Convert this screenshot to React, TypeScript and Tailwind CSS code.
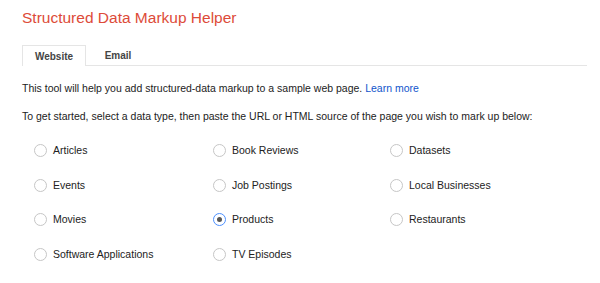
import React from "react";

const items = [
  "Articles", "Book Reviews", "Datasets",
  "Events", "Job Postings", "Local Businesses",
  "Movies", "Products", "Restaurants",
  "Software Applications", "TV Episodes",
];

function Radio({ checked }: { checked?: boolean }) {
  return (
    <span
      className={
        "flex h-[13px] w-[13px] shrink-0 items-center justify-center rounded-full border bg-white " +
        (checked ? "border-[#4d90fe]" : "border-[#c6c6c6]")
      }
    >
      {checked && <span className="h-[5px] w-[5px] rounded-full bg-[#555]" />}
    </span>
  );
}

export default function App() {
  return (
    <div
      className="h-[283px] w-[600px] bg-white text-[#222]"
      style={{ fontFamily: '"Liberation Sans", Arial, sans-serif' }}
    >
      <div className="pl-[22px] pr-[13px]">
        <h1 className="pt-[9px] text-[15.5px] leading-[18px] text-[#dd4b39]">
          Structured Data Markup Helper
        </h1>
        <div className="mt-[18px] flex h-[21px] border-b border-[#e5e5e5] text-[10px] font-bold text-[#444]">
          <div className="-mb-px flex w-[64px] items-center justify-center border border-b-0 border-[#e5e5e5] bg-white">
            Website
          </div>
          <div className="flex w-[64px] items-center justify-center">Email</div>
        </div>
        <p className="mt-[16px] whitespace-nowrap text-[10.5px] leading-[13px]">
          This tool will help you add structured-data markup to a sample web page.{" "}
          <span className="text-[#1155cc]">Learn more</span>
        </p>
        <p className="mt-[15px] whitespace-nowrap text-[10.5px] leading-[13px]">
          To get started, select a data type, then paste the URL or HTML source of the page you wish to mark up below:
        </p>
        <div className="mt-[20px] grid grid-cols-[179px_177px_1fr] gap-y-[19.7px] pl-[12px] text-[10.5px] leading-[15px]">
          {items.map((it) => (
            <label key={it} className="flex items-center gap-[6px]">
              <Radio checked={it === "Products"} />
              <span>{it}</span>
            </label>
          ))}
        </div>
      </div>
    </div>
  );
}
